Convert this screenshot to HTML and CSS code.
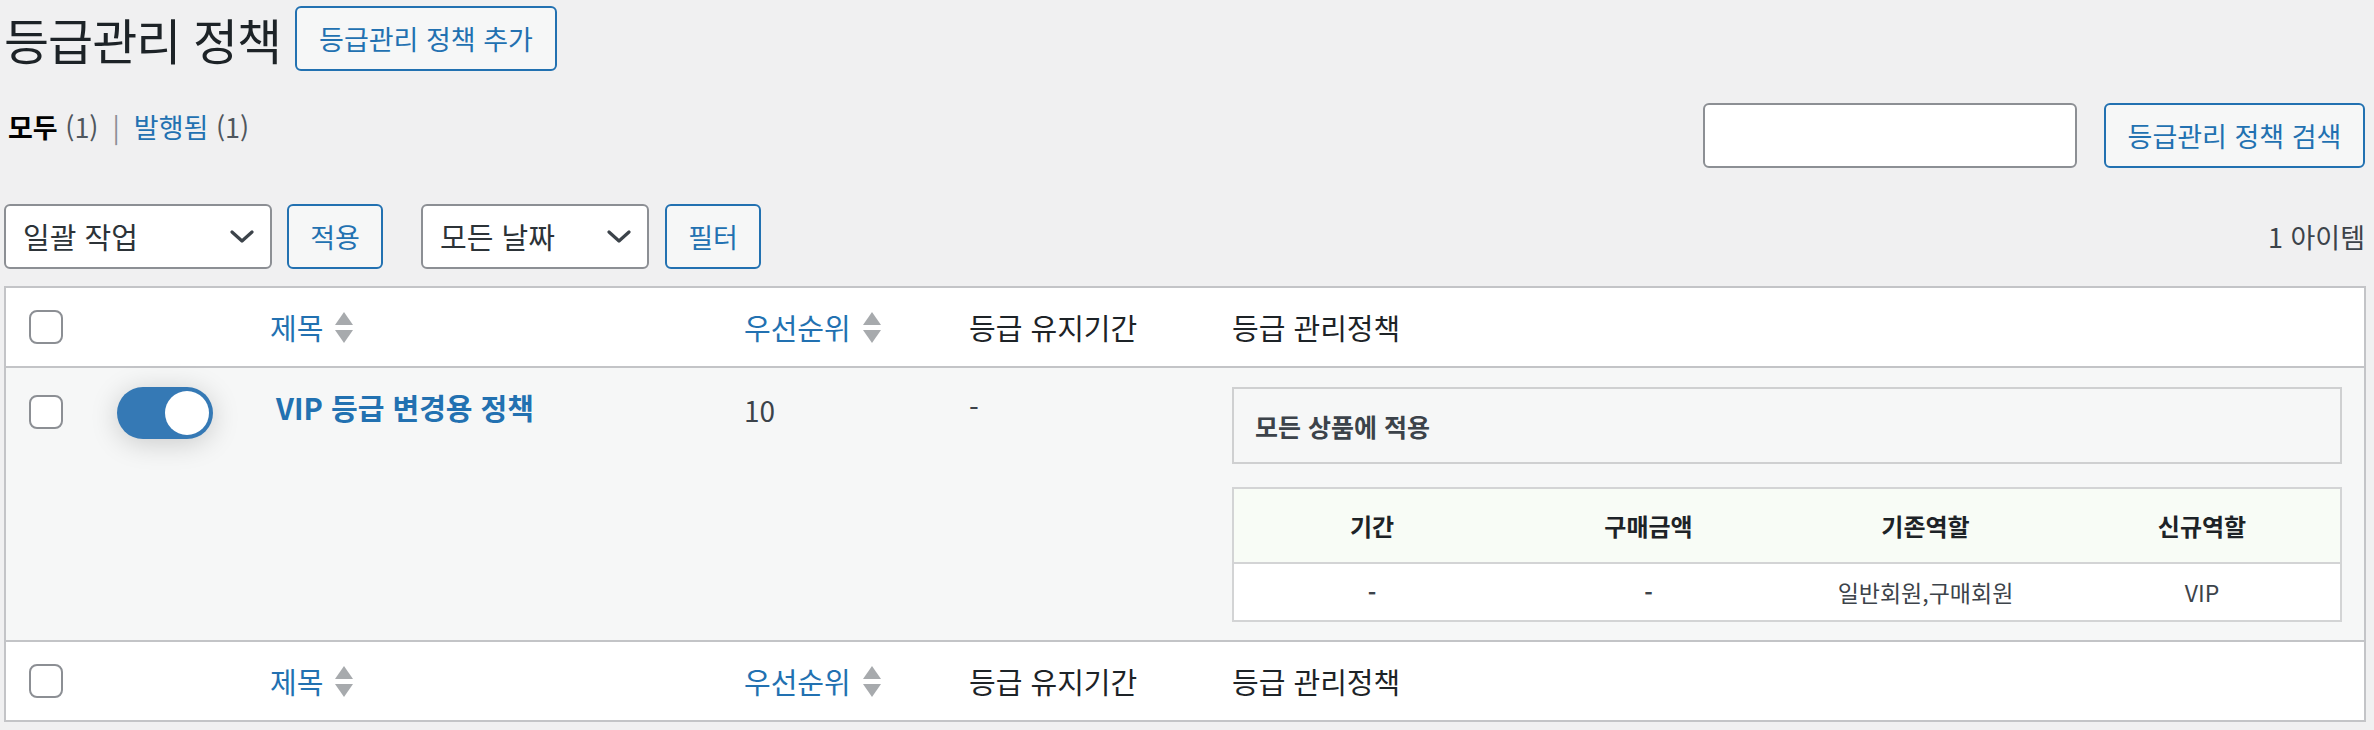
FILE: index.html
```html
<!DOCTYPE html>
<html lang="ko">
<head>
<meta charset="utf-8">
<title>등급관리 정책</title>
<link rel="stylesheet" href="styles.css">
</head>
<body>
<div class="wrap">
  <div class="head">
    <h1 class="title">등급관리 정책</h1>
    <a class="btn btn-add" href="#">등급관리 정책 추가</a>
  </div>

  <div class="subbar">
    <ul class="subsubsub">
      <li class="current">모두 <span class="count">(1)</span></li>
      <li class="sep">|</li>
      <li><a href="#">발행됨</a> <span class="count">(1)</span></li>
    </ul>
    <div class="search">
      <input class="search-input" type="text" aria-label="검색">
      <button class="btn btn-search" type="button">등급관리 정책 검색</button>
    </div>
  </div>

  <div class="tablenav">
    <div class="actions">
      <div class="select select-bulk"><span>일괄 작업</span><svg class="chev" viewBox="0 0 24 14" width="24" height="14"><path d="M2 2 L12 11 L22 2" fill="none" stroke="#3c434a" stroke-width="3.2" stroke-linecap="round" stroke-linejoin="round"/></svg></div>
      <button class="btn btn-sm" type="button">적용</button>
    </div>
    <div class="actions">
      <div class="select select-date"><span>모든 날짜</span><svg class="chev" viewBox="0 0 24 14" width="24" height="14"><path d="M2 2 L12 11 L22 2" fill="none" stroke="#3c434a" stroke-width="3.2" stroke-linecap="round" stroke-linejoin="round"/></svg></div>
      <button class="btn btn-sm" type="button">필터</button>
    </div>
    <div class="displaying">1 아이템</div>
  </div>

  <table class="list">
    <colgroup>
      <col class="c-cb"><col class="c-tog"><col class="c-title"><col class="c-pri"><col class="c-keep"><col class="c-policy">
    </colgroup>
    <thead>
      <tr>
        <td class="cb"><span class="chk"></span></td>
        <th></th>
        <th><a class="sort" href="#">제목 <svg class="arrows" viewBox="0 0 18 31" width="18" height="31"><path d="M9 0 L18 13 L0 13 Z" fill="#a7aaad"/><path d="M0 18 L18 18 L9 31 Z" fill="#a7aaad"/></svg></a></th>
        <th><a class="sort" href="#">우선순위 <svg class="arrows" viewBox="0 0 18 31" width="18" height="31"><path d="M9 0 L18 13 L0 13 Z" fill="#a7aaad"/><path d="M0 18 L18 18 L9 31 Z" fill="#a7aaad"/></svg></a></th>
        <th>등급 유지기간</th>
        <th>등급 관리정책</th>
      </tr>
    </thead>
    <tbody>
      <tr class="row">
        <td class="cb"><span class="chk chk-row"></span></td>
        <td><span class="toggle"><span class="knob"></span></span></td>
        <td><a class="row-title" href="#">VIP 등급 변경용 정책</a></td>
        <td class="num">10</td>
        <td class="dash">-</td>
        <td class="policy">
          <div class="scope">모든 상품에 적용</div>
          <table class="rules">
            <thead><tr><th>기간</th><th>구매금액</th><th>기존역할</th><th>신규역할</th></tr></thead>
            <tbody><tr><td class="b">-</td><td class="b">-</td><td>일반회원,구매회원</td><td>VIP</td></tr></tbody>
          </table>
        </td>
      </tr>
    </tbody>
    <tfoot>
      <tr>
        <td class="cb"><span class="chk"></span></td>
        <th></th>
        <th><a class="sort" href="#">제목 <svg class="arrows" viewBox="0 0 18 31" width="18" height="31"><path d="M9 0 L18 13 L0 13 Z" fill="#a7aaad"/><path d="M0 18 L18 18 L9 31 Z" fill="#a7aaad"/></svg></a></th>
        <th><a class="sort" href="#">우선순위 <svg class="arrows" viewBox="0 0 18 31" width="18" height="31"><path d="M9 0 L18 13 L0 13 Z" fill="#a7aaad"/><path d="M0 18 L18 18 L9 31 Z" fill="#a7aaad"/></svg></a></th>
        <th>등급 유지기간</th>
        <th>등급 관리정책</th>
      </tr>
    </tfoot>
  </table>
</div>
</body>
</html>
```

FILE: styles.css
```css
* { box-sizing: border-box; }
html, body { margin: 0; padding: 0; }
body {
  background: #f0f0f1;
  color: #3c434a;
  font-family: "Noto Sans CJK KR", "Noto Sans", sans-serif;
  font-size: 28px;
  line-height: 1.4;
}
a { text-decoration: none; color: #2271b1; }
.wrap { padding: 0 8px 0 4px; }

.head {
  display: flex;
  align-items: center;
  margin-top: 6px;
  height: 65px;
}
.title {
  margin: 0;
  font-size: 49px;
  font-weight: 400;
  letter-spacing: -1px;
  line-height: 65px;
  color: #1d2327;
  width: 291px;
}
.btn {
  display: inline-flex;
  align-items: center;
  justify-content: center;
  height: 65px;
  border: 2px solid #2271b1;
  border-radius: 6px;
  background: #f6f7f7;
  color: #2271b1;
  font-family: inherit;
  font-size: 27px;
  line-height: 1;
  padding: 0;
}
.btn-add { width: 262px; }

.subbar {
  display: flex;
  justify-content: space-between;
  align-items: flex-start;
  margin-top: 32px;
  height: 65px;
}
.subsubsub {
  list-style: none;
  margin: 5px 0 0 4px;
  padding: 0;
  display: flex;
  font-size: 27px;
  line-height: 38px;
}
.subsubsub li { margin: 0; }
.subsubsub .current { color: #000; font-weight: 700; }
.subsubsub .count { color: #50575e; font-weight: 400; }
.subsubsub .sep { color: #8c8f94; margin: 0 14px 0 14px; }
.search { display: flex; gap: 27px; margin-right: 1px; }
.search-input {
  width: 374px;
  height: 65px;
  border: 2px solid #8c8f94;
  border-radius: 6px;
  background: #fff;
}
.btn-search { width: 261px; }

.tablenav {
  display: flex;
  align-items: center;
  margin-top: 36px;
  height: 65px;
}
.actions { display: flex; gap: 15px; margin-right: 38px; }
.actions + .actions { gap: 16px; }
.select {
  height: 65px;
  border: 2px solid #8c8f94;
  border-radius: 6px;
  background: #fff;
  display: flex;
  align-items: center;
  justify-content: space-between;
  padding: 0 16px 0 17px;
  font-size: 29px;
  color: #2c3338;
}
.select-bulk { width: 268px; }
.select-date { width: 228px; }
.chev { display: block; }
.btn-sm { width: 96px; }
.displaying {
  margin-left: auto;
  font-size: 27px;
  color: #3c434a;
  margin-right: 1px;
}

.list {
  margin-top: 17px;
  width: 100%;
  table-layout: fixed;
  border-collapse: collapse;
  border: 2px solid #c3c4c7;
  background: #fff;
}
.c-cb { width: 96px; }
.c-tog { width: 153px; }
.c-title { width: 474px; }
.c-pri { width: 225px; }
.c-keep { width: 263px; }
.list > thead > tr, .list > tfoot > tr { height: 80px; }
.list > thead > tr > th, .list > tfoot > tr > th, .list > thead > tr > td, .list > tfoot > tr > td {
  text-align: left;
  font-weight: 400;
  padding: 0 16px;
  vertical-align: middle;
  color: #1d2327;
  font-size: 29px;
  line-height: 38px;
}
.list > thead > tr { border-bottom: 2px solid #c3c4c7; }
.list > tfoot > tr { border-top: 2px solid #c3c4c7; }
.list .cb { padding: 0 0 0 23px !important; }
.chk {
  display: block;
  width: 34px;
  height: 34px;
  border: 2px solid #8c8f94;
  border-radius: 8px;
  background: #fff;
}
.sort { display: inline-flex; align-items: center; gap: 12px; color: #2271b1; }
.arrows { display: block; }

.row { background: #f6f7f7; }
.row > td { vertical-align: top; padding: 19px 16px 18px; font-size: 28px; line-height: 38px; color: #3c434a; }
.row > td.cb { padding-top: 27px !important; }
.chk-row { background: #fff; }
.toggle {
  display: block;
  width: 96px;
  height: 52px;
  border-radius: 26px;
  background: #3579b5;
  margin-top: 0;
  position: relative;
  box-shadow: 0 4px 28px rgba(0, 0, 0, 0.18);
}
.knob {
  position: absolute;
  right: 4px;
  top: 4px;
  width: 44px;
  height: 44px;
  border-radius: 50%;
  background: #fff;
}
.row-title {
  display: inline-block;
  margin: 1px 0 0 6px;
  font-weight: 700;
  font-size: 29px;
  color: #2271b1;
}
.num { padding-top: 23px !important; }
.dash { padding-top: 20px !important; }
.row > td.policy { padding: 19px 22px 18px 16px; }
.scope {
  height: 77px;
  border: 2px solid #cfd0d1;
  background: #f6f7f7;
  display: flex;
  align-items: center;
  padding-left: 21px;
  font-size: 25px;
  font-weight: 700;
  color: #3c434a;
}
.rules {
  margin-top: 23px;
  width: 100%;
  table-layout: fixed;
  border-collapse: collapse;
  border: 2px solid #d3d4d5;
  background: #fff;
}
.rules th {
  height: 75px;
  background: #f8fcf6;
  border-bottom: 2px solid #d3d4d5;
  font-size: 24px;
  font-weight: 700;
  color: #1d2327;
  text-align: center;
  padding: 0;
}
.rules td {
  height: 58px;
  font-size: 23px;
  color: #3c434a;
  text-align: center;
  padding: 0;
}
.rules td.b { font-weight: 700; color: #3c434a; }
```
